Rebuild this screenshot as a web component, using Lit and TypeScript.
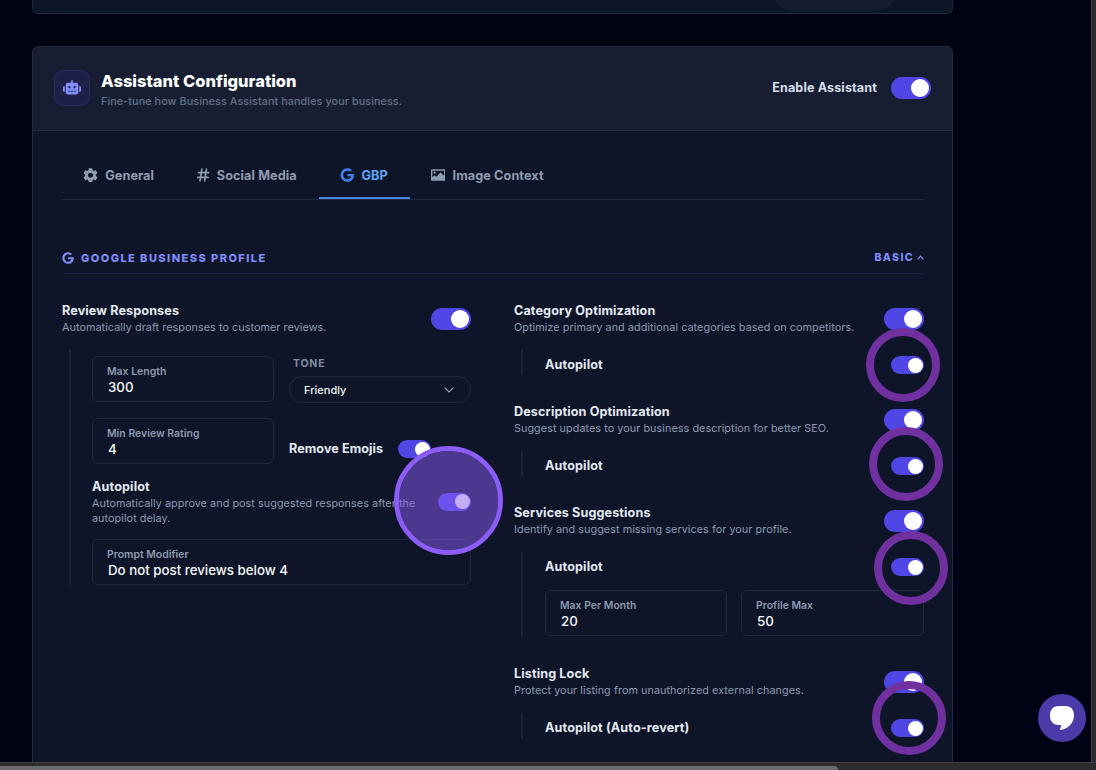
import { LitElement, html, css, svg } from "lit";
import { customElement, property } from "lit/decorators.js";

const googlePath =
  "M488 261.8C488 403.3 391.1 504 248 504 110.8 504 0 393.2 0 256S110.8 8 248 8c66.8 0 123 24.5 166.3 64.9l-67.5 64.9C258.5 52.6 94.3 116.6 94.3 256c0 86.5 69.1 156.6 153.7 156.6 98.2 0 135-70.4 140.8-106.9H248v-85.3h236.1c2.3 12.7 3.9 24.9 3.9 41.4z";

const robotPath =
  "M32,224H64V416H32A31.96166,31.96166,0,0,1,0,384V256A31.96166,31.96166,0,0,1,32,224Zm512-48V448a64.06328,64.06328,0,0,1-64,64H160a64.06328,64.06328,0,0,1-64-64V176a79.974,79.974,0,0,1,80-80H288V32a32,32,0,0,1,64,0V96H464A79.974,79.974,0,0,1,544,176ZM264,256a40,40,0,1,0-40,40A39.997,39.997,0,0,0,264,256Zm-8,128H192v32h64Zm96,0H288v32h64ZM456,256a40,40,0,1,0-40,40A39.997,39.997,0,0,0,456,256Zm-8,128H384v32h64ZM640,256V384a31.96166,31.96166,0,0,1-32,32H576V224h32A31.96166,31.96166,0,0,1,640,256Z";

const gearPath =
  "M19.43 12.98c.04-.32.07-.64.07-.98s-.03-.66-.07-.98l2.11-1.65c.19-.15.24-.42.12-.64l-2-3.46c-.12-.22-.39-.3-.61-.22l-2.49 1c-.52-.4-1.08-.73-1.69-.98l-.38-2.65C14.46 2.18 14.25 2 14 2h-4c-.25 0-.46.18-.49.42l-.38 2.65c-.61.25-1.17.59-1.69.98l-2.49-1c-.23-.09-.49 0-.61.22l-2 3.46c-.13.22-.07.49.12.64l2.11 1.65c-.04.32-.07.65-.07.98s.03.66.07.98l-2.11 1.65c-.19.15-.24.42-.12.64l2 3.46c.12.22.39.3.61.22l2.49-1c.52.4 1.08.73 1.69.98l.38 2.65c.03.24.24.42.49.42h4c.25 0 .46-.18.49-.42l.38-2.65c.61-.25 1.17-.59 1.69-.98l2.49 1c.23.09.49 0 .61-.22l2-3.46c.12-.22.07-.49-.12-.64l-2.11-1.65zM12 15.5c-1.93 0-3.5-1.57-3.5-3.5s1.57-3.5 3.5-3.5 3.5 1.57 3.5 3.5-1.57 3.5-3.5 3.5z";

const icons: Record<string, unknown> = {
  gear: html`<svg width="15" height="14.500" viewBox="1.8 1.8 20.4 20.4" fill="currentColor">${svg`<path d=${gearPath} />`}</svg>`,
  hash: html`<svg width="12.500" height="14" viewBox="0.400 0 12.400 14" fill="none" stroke="currentColor" stroke-width="1.7" stroke-linecap="round">
    <path d="M5.200 1.200 3.400 12.800M9.800 1.200 8 12.800M1.800 4.600h10.200M1.200 9.400h10.200" />
  </svg>`,
  google: html`<svg width="14.500" height="14" viewBox="0 0 488 512" fill="currentColor">${svg`<path d=${googlePath} />`}</svg>`,
  image: html`<svg width="14.500" height="12" viewBox="0 0 15 12" fill="currentColor">
    <path fill-rule="evenodd" d="M1.200 0h12.600A1.200 1.200 0 0 1 15 1.200v9.600a1.200 1.200 0 0 1-1.200 1.200H1.200A1.200 1.200 0 0 1 0 10.800V1.200A1.200 1.200 0 0 1 1.200 0zM1.500 1.500v6.900L3.700 6.200l1.900 1.500 4.300-4.500 3.600 3.600V1.500z" />
    <circle cx="3.800" cy="3.700" r="1.200" />
  </svg>`,
};

@customElement("toggle-switch")
export class ToggleSwitch extends LitElement {
  @property({ type: Boolean, reflect: true }) small = false;

  static styles = css`
    :host {
      display: block;
      flex: none;
      box-sizing: border-box;
      width: 40px;
      height: 22px;
      padding: 2px;
      border-radius: 11px;
      background: #4f46e5;
    }
    .knob {
      width: 18px;
      height: 18px;
      margin-left: auto;
      border-radius: 50%;
      background: #fff;
    }
    :host([small]) {
      width: 33px;
      height: 18px;
      padding: 1.5px;
    }
    :host([small]) .knob {
      width: 15px;
      height: 15px;
    }
  `;

  render() {
    return html`<div class="knob"></div>`;
  }
}

@customElement("text-field")
export class TextField extends LitElement {
  @property() label = "";
  @property() value = "";

  static styles = css`
    :host {
      display: block;
      box-sizing: border-box;
      height: 46px;
      padding: 8px 14px 0;
      border: 1px solid #1f273a;
      border-radius: 6px;
    }
    .label {
      font-size: 10.4px;
      line-height: 13px;
      font-weight: 600;
      letter-spacing: 0.03px;
      color: #8d9ab0;
    }
    .value {
      padding-left: 1px;
      font-size: 13.3px;
      line-height: 19px;
      font-weight: 500;
      color: #f8fafc;
    }
  `;

  render() {
    return html`<div class="label">${this.label}</div>
      <div class="value">${this.value}</div>`;
  }
}

@customElement("setting-row")
export class SettingRow extends LitElement {
  @property() heading = "";
  @property() detail = "";

  static styles = css`
    :host {
      display: flex;
      align-items: center;
      justify-content: space-between;
      height: 33px;
    }
    .heading {
      font-size: 12.6px;
      line-height: 17px;
      font-weight: 700;
      letter-spacing: 0.12px;
      color: #e5eaf3;
    }
    .detail {
      padding-top: 1px;
      margin-bottom: -1px;
      font-size: 10.8px;
      line-height: 16px;
      letter-spacing: 0.06px;
      color: #8d9ab0;
      white-space: nowrap;
    }
  `;

  render() {
    return html`<div>
        <div class="heading">${this.heading}</div>
        <div class="detail">${this.detail}</div>
      </div>
      <toggle-switch></toggle-switch>`;
  }
}

@customElement("app-root")
export class AppRoot extends LitElement {
  static styles = css`
    :host {
      display: block;
      position: relative;
      width: 1096px;
      height: 770px;
      overflow: hidden;
      background: #010314;
      font-family: Inter, "Liberation Sans", sans-serif;
    }
    svg {
      display: block;
      flex: none;
    }
    .frame {
      display: grid;
      grid-template: 762px 8px / 1091px 5px;
    }
    .page {
      box-sizing: border-box;
      padding-left: 32px;
      overflow: hidden;
    }
    .gutter {
      background: #2b2b2c;
      border-left: 1px solid #3a3a3c;
      box-sizing: border-box;
    }
    .track {
      grid-column: 1 / 3;
      box-sizing: border-box;
      padding-top: 3px;
      border-top: 1px solid #3d3d3f;
      background: #2b2b2c;
    }
    .thumb {
      width: 838px;
      height: 4px;
      border-radius: 0 4px 0 0;
      background: #6b6b6b;
    }
    .previous {
      box-sizing: border-box;
      width: 921px;
      height: 14px;
      padding-left: 739px;
      border: 1px solid #1f293b;
      border-top: 0;
      border-radius: 0 0 6px 6px;
      background: #0d1527;
      overflow: hidden;
    }
    .pill {
      width: 124px;
      height: 40px;
      margin-top: -29px;
      border-radius: 20px;
      background: #141c2e;
    }
    .card {
      box-sizing: border-box;
      width: 921px;
      height: 730px;
      margin-top: 32px;
      border: 1px solid #222a3d;
      border-radius: 6px;
      background: #0e1528;
      overflow: hidden;
    }
    .card-header {
      box-sizing: border-box;
      display: flex;
      align-items: center;
      height: 84px;
      padding: 0 21px 2px;
      border-bottom: 1px solid #222a3f;
      background: #181e32;
    }
    .avatar {
      box-sizing: border-box;
      display: grid;
      place-items: center;
      width: 36px;
      height: 36px;
      border: 1px solid #2a2a60;
      border-radius: 9px;
      background: #1f2047;
      color: #818cf8;
    }
    .titles {
      flex: 1;
      padding: 6px 0 0 11px;
    }
    .title {
      font-size: 16.5px;
      line-height: 21px;
      font-weight: 800;
      color: #fff;
    }
    .subtitle {
      margin-top: 1px;
      font-size: 10.8px;
      line-height: 17px;
      font-weight: 500;
      letter-spacing: 0.08px;
      color: #627087;
    }
    .enable {
      display: flex;
      align-items: center;
      gap: 14px;
      font-size: 12.6px;
      font-weight: 700;
      letter-spacing: 0.12px;
      color: #d8dfeb;
    }
    .body {
      padding: 20px 28px 0 29px;
    }
    .tabs {
      display: flex;
      height: 48px;
      border-bottom: 1px solid #20283b;
    }
    .tab {
      box-sizing: border-box;
      display: flex;
      align-items: center;
      gap: 7.2px;
      height: 48px;
      padding: 2px 22px 0 21px;
      border-bottom: 2px solid transparent;
      font-size: 12.7px;
      font-weight: 700;
      letter-spacing: 0.08px;
      white-space: nowrap;
      color: #8f9bb0;
    }
    .active {
      border-bottom-color: #4b86e6;
      border-radius: 2px 2px 0 0;
      color: #60a5fa;
    }
    .active svg {
      color: #3f80ea;
    }
    .section {
      display: flex;
      align-items: center;
      justify-content: space-between;
      box-sizing: border-box;
      height: 31px;
      margin-top: 43px;
      border-bottom: 1px solid #1a1f4a;
      color: #818cf8;
    }
    .section-name {
      display: flex;
      align-items: center;
      gap: 7px;
      font-size: 11px;
      font-weight: 800;
      letter-spacing: 1.46px;
    }
    .level {
      display: flex;
      align-items: center;
      gap: 3px;
      padding-bottom: 2px;
      font-size: 10.5px;
      font-weight: 800;
      letter-spacing: 1.4px;
    }
    .columns {
      display: grid;
      grid-template-columns: 409px 410px;
      justify-content: space-between;
      align-items: start;
      padding-top: 28.2px;
    }
    .nested {
      margin: 15px 0 28px 7px;
      padding: 6px 0 1px 22px;
      border-left: 2px solid #1d2538;
    }
    .nested.last {
      margin-bottom: 28.3px;
    }
    .sub {
      display: flex;
      align-items: center;
      justify-content: space-between;
      height: 18px;
      font-size: 12.6px;
      font-weight: 700;
      letter-spacing: 0.14px;
      color: #e5eaf3;
    }
    .sub span {
      padding-bottom: 1px;
    }
    .pair {
      display: grid;
      grid-template-columns: 182px 183px;
      justify-content: space-between;
      padding-top: 14px;
    }
    .left {
      margin-top: 14px;
      padding: 7px 0 0 21px;
    }
    .grid {
      display: grid;
      grid-template-columns: 182px 182px;
      justify-content: space-between;
      row-gap: 16px;
    }
    .tone-label {
      padding-left: 4px;
      margin-top: 1px;
      font-size: 10.5px;
      line-height: 13px;
      font-weight: 700;
      letter-spacing: 0.8px;
      color: #7f8ca3;
    }
    .select {
      box-sizing: border-box;
      display: flex;
      align-items: center;
      justify-content: space-between;
      height: 27px;
      margin: 6px 0 -1px;
      padding: 0 16px 0 14px;
      border: 1px solid #1f273a;
      border-radius: 13px;
      font-size: 11px;
      font-weight: 500;
      color: #f1f5f9;
    }
    .emoji {
      display: flex;
      align-items: center;
      gap: 15px;
      height: 46px;
      padding-top: 8px;
      margin-bottom: -8px;
      font-size: 12.6px;
      font-weight: 700;
      letter-spacing: 0.08px;
      color: #e5eaf3;
    }
    .emoji span {
      padding-bottom: 1px;
    }
    .autopilot {
      display: flex;
      align-items: center;
      justify-content: space-between;
      height: 49px;
      margin: 13px 0;
    }
    .autopilot-title {
      font-size: 12.6px;
      line-height: 19px;
      font-weight: 700;
      letter-spacing: 0.14px;
      color: #e5eaf3;
    }
    .autopilot-text {
      font-size: 10.8px;
      line-height: 15px;
      letter-spacing: 0.06px;
      white-space: nowrap;
      color: #8d9ab0;
    }
    .ring {
      position: absolute;
      box-sizing: border-box;
      width: 74px;
      height: 74px;
      border: 8px solid #7030a0;
      border-radius: 50%;
    }
    .ring-a { left: 866px; top: 328px; }
    .ring-b { left: 869px; top: 427px; }
    .ring-c { left: 874px; top: 531px; }
    .ring-d { left: 872px; top: 681px; }
    .spot {
      position: absolute;
      left: 394px;
      top: 446px;
      box-sizing: border-box;
      width: 109px;
      height: 109px;
      border: 5px solid #8b5cf6;
      border-radius: 50%;
      background: rgba(139, 92, 246, 0.5);
      background-clip: padding-box;
    }
    .chat {
      position: absolute;
      left: 1038px;
      top: 694px;
      display: grid;
      place-items: center;
      width: 48px;
      height: 48px;
      border-radius: 50%;
      background: #4a3ba8;
    }
  `;

  private tab(icon: string, name: string, active = false) {
    return html`<div class="tab ${active ? "active" : ""}">${icons[icon]}<span>${name}</span></div>`;
  }

  private sub(name: string) {
    return html`<div class="sub"><span>${name}</span><toggle-switch small></toggle-switch></div>`;
  }

  render() {
    return html`
      <div class="frame">
        <div class="page">
          <div class="previous"><div class="pill"></div></div>
          <div class="card">
            <div class="card-header">
              <div class="avatar">
                <svg width="18" height="14.400" viewBox="0 0 640 512" fill="currentColor">${svg`<path d=${robotPath} />`}</svg>
              </div>
              <div class="titles">
                <div class="title">Assistant Configuration</div>
                <div class="subtitle">Fine-tune how Business Assistant handles your business.</div>
              </div>
              <div class="enable"><span>Enable Assistant</span><toggle-switch></toggle-switch></div>
            </div>
            <div class="body">
              <div class="tabs">
                ${this.tab("gear", "General")} ${this.tab("hash", "Social Media")}
                ${this.tab("google", "GBP", true)} ${this.tab("image", "Image Context")}
              </div>
              <div class="section">
                <div class="section-name">
                  <svg width="12" height="12" viewBox="0 0 488 512" fill="currentColor">${svg`<path d=${googlePath} />`}</svg>
                  <span>GOOGLE BUSINESS PROFILE</span>
                </div>
                <div class="level">
                  <span>BASIC</span>
                  <svg width="7" height="5" viewBox="0 0 7 5" fill="none" stroke="currentColor" stroke-width="1.200">
                    <path d="M.6 4.300 3.500 1.200 6.400 4.300" />
                  </svg>
                </div>
              </div>
              <div class="columns">
                <div>
                  <setting-row heading="Review Responses" detail="Automatically draft responses to customer reviews."></setting-row>
                  <div class="nested left">
                    <div class="grid">
                      <text-field label="Max Length" value="300"></text-field>
                      <div>
                        <div class="tone-label">TONE</div>
                        <div class="select">
                          <span>Friendly</span>
                          <svg width="10" height="6" viewBox="0 0 10 6" fill="none" stroke="#94a3b8" stroke-width="1.200">
                            <path d="M.7.700 5 5 9.300.700" />
                          </svg>
                        </div>
                      </div>
                      <text-field label="Min Review Rating" value="4"></text-field>
                      <div class="emoji"><span>Remove Emojis</span><toggle-switch small></toggle-switch></div>
                    </div>
                    <div class="autopilot">
                      <div>
                        <div class="autopilot-title">Autopilot</div>
                        <div class="autopilot-text">
                          Automatically approve and post suggested responses after the<br />autopilot delay.
                        </div>
                      </div>
                      <toggle-switch small></toggle-switch>
                    </div>
                    <text-field label="Prompt Modifier" value="Do not post reviews below 4"></text-field>
                  </div>
                </div>
                <div>
                  <setting-row heading="Category Optimization" detail="Optimize primary and additional categories based on competitors."></setting-row>
                  <div class="nested">${this.sub("Autopilot")}</div>
                  <setting-row heading="Description Optimization" detail="Suggest updates to your business description for better SEO."></setting-row>
                  <div class="nested">${this.sub("Autopilot")}</div>
                  <setting-row heading="Services Suggestions" detail="Identify and suggest missing services for your profile."></setting-row>
                  <div class="nested last">
                    ${this.sub("Autopilot")}
                    <div class="pair">
                      <text-field label="Max Per Month" value="20"></text-field>
                      <text-field label="Profile Max" value="50"></text-field>
                    </div>
                  </div>
                  <setting-row heading="Listing Lock" detail="Protect your listing from unauthorized external changes."></setting-row>
                  <div class="nested">${this.sub("Autopilot (Auto-revert)")}</div>
                </div>
              </div>
            </div>
          </div>
        </div>
        <div class="gutter"></div>
        <div class="track"><div class="thumb"></div></div>
      </div>
      <div class="chat">
        <svg width="24" height="24" viewBox="0 0 24 24" fill="#fff">
          <path d="M9 0h6c5.500 0 9 3.200 9 9.300 0 8-5.800 13.300-13 14.700-.8.150-1.200-.5-.8-1.200.6-1 .9-2.200.8-3.800H9C3.500 19 0 15.800 0 9.500S3.500 0 9 0z" />
        </svg>
      </div>
      <div class="spot"></div>
      <div class="ring ring-a"></div>
      <div class="ring ring-b"></div>
      <div class="ring ring-c"></div>
      <div class="ring ring-d"></div>
    `;
  }
}
